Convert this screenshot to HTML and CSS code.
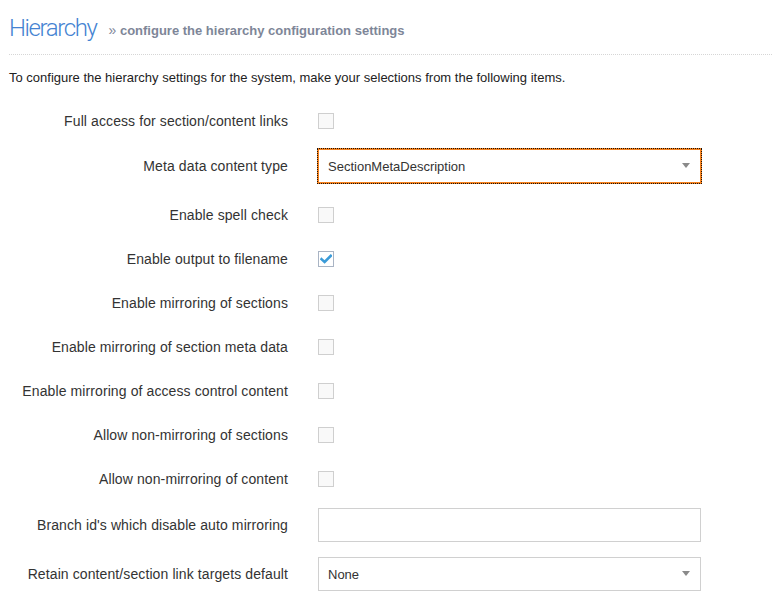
FILE: index.html
```html
<!DOCTYPE html>
<html>
<head>
<meta charset="utf-8">
<link rel="stylesheet" href="styles.css">
</head>
<body>
<div class="page">
  <div class="header">
    <h1 class="title">Hierarchy</h1>
    <span class="subtitle"><span class="raquo">»</span> configure the hierarchy configuration settings</span>
  </div>
  <p class="intro">To configure the hierarchy settings for the system, make your selections from the following items.</p>
  <div class="form">
    <div class="row"><label class="lbl">Full access for section/content links</label><div class="ctl"><span class="cb"></span></div></div>
    <div class="row row-select row-raised"><label class="lbl">Meta data content type</label><div class="ctl"><div class="select focused"><span>SectionMetaDescription</span><span class="caret"></span></div></div></div>
    <div class="row"><label class="lbl">Enable spell check</label><div class="ctl"><span class="cb"></span></div></div>
    <div class="row"><label class="lbl">Enable output to filename</label><div class="ctl"><span class="cb checked"><svg width="12" height="10" viewBox="0 0 12 10"><path d="M1.5 5.2 L4.6 8 L10.8 1.8" fill="none" stroke="#3a9bd8" stroke-width="2.6" stroke-linecap="square"/></svg></span></div></div>
    <div class="row"><label class="lbl">Enable mirroring of sections</label><div class="ctl"><span class="cb"></span></div></div>
    <div class="row"><label class="lbl">Enable mirroring of section meta data</label><div class="ctl"><span class="cb"></span></div></div>
    <div class="row"><label class="lbl">Enable mirroring of access control content</label><div class="ctl"><span class="cb"></span></div></div>
    <div class="row"><label class="lbl">Allow non-mirroring of sections</label><div class="ctl"><span class="cb"></span></div></div>
    <div class="row"><label class="lbl">Allow non-mirroring of content</label><div class="ctl"><span class="cb"></span></div></div>
    <div class="row row-input"><label class="lbl">Branch id's which disable auto mirroring</label><div class="ctl"><div class="input"></div></div></div>
    <div class="row row-select"><label class="lbl">Retain content/section link targets default</label><div class="ctl"><div class="select"><span>None</span><span class="caret"></span></div></div></div>
  </div>
</div>
</body>
</html>
```
FILE: styles.css
```css
html, body { margin: 0; padding: 0; background: #fff; }
body { font-family: "Liberation Sans", Arial, sans-serif; color: #333; }
.page { padding: 0 0 0 9px; }
.header {
  display: flex;
  align-items: flex-start;
  gap: 12px;
  padding-top: 14px;
  height: 55px;
  box-sizing: border-box;
  border-bottom: 1px dotted #d6d6d6;
}
.title {
  margin: 0;
  font-family: Roboto, "Liberation Sans", sans-serif;
  font-weight: 300;
  font-size: 24px;
  line-height: 28px;
  color: #4583d2;
  letter-spacing: -1.4px;
}
.subtitle {
  margin-top: 8px;
  font-size: 13px;
  line-height: 16px;
  font-weight: bold;
  color: #7e8698;
}
.raquo { font-weight: normal; font-size: 14px; }
.intro {
  margin: 15px 0 0;
  font-size: 13px;
  line-height: 16px;
  color: #222;
}
.form {
  margin-top: 17px;
  display: flex;
  flex-direction: column;
  gap: 8px;
}
.row {
  display: grid;
  grid-template-columns: 279px 383px;
  column-gap: 30px;
  align-items: center;
  height: 36px;
  box-sizing: border-box;
}
.row-select { height: 42px; }
.row-raised { padding-bottom: 4px; }
.row-input { height: 40px; }
.lbl {
  text-align: right;
  font-size: 14px;
  letter-spacing: 0.1px;
  color: #333;
  white-space: nowrap;
}
.ctl { display: flex; align-items: center; }
.cb {
  width: 14px;
  height: 14px;
  border: 1px solid #cfcfcf;
  background: #f9f9f9;
  display: flex;
  align-items: center;
  justify-content: center;
}
.cb.checked { border-color: #a9b4c4; background: #fff; }
.select {
  width: 100%;
  height: 34px;
  box-sizing: border-box;
  border: 1px solid #d0d0d0;
  background: #fff;
  display: flex;
  align-items: center;
  justify-content: space-between;
  padding: 0 10px 0 9px;
  font-size: 13px;
  color: #333;
}
.select.focused {
  border-color: #f5821f;
  box-shadow: 0 0 0 1px #f5821f;
  outline: 1px dotted #1a1008;
}
.caret {
  width: 0;
  height: 0;
  border-left: 4px solid transparent;
  border-right: 4px solid transparent;
  border-top: 5px solid #8a8a8a;
  margin-top: -2px;
}
.input {
  width: 100%;
  height: 34px;
  box-sizing: border-box;
  border: 1px solid #d0d0d0;
  background: #fff;
}
```
